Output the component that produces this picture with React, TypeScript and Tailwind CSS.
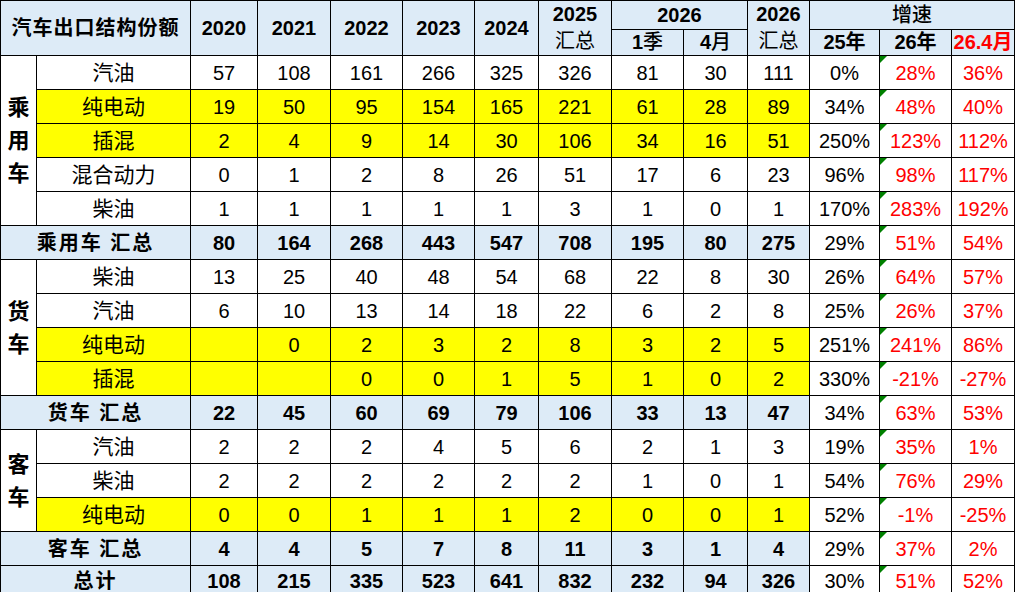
import React from 'react'

type Row = {
  label: string
  yellow?: boolean
  vals: (number | '')[]
  growth: string[]
}

type Group = {
  name: string
  summary: string
  rows: Row[]
  total: { vals: number[]; growth: string[] }
}

const groups: Group[] = [
  {
    name: '乘用车',
    summary: '乘用车 汇总',
    rows: [
      { label: '汽油', vals: [57, 108, 161, 266, 325, 326, 81, 30, 111], growth: ['0%', '28%', '36%'] },
      { label: '纯电动', yellow: true, vals: [19, 50, 95, 154, 165, 221, 61, 28, 89], growth: ['34%', '48%', '40%'] },
      { label: '插混', yellow: true, vals: [2, 4, 9, 14, 30, 106, 34, 16, 51], growth: ['250%', '123%', '112%'] },
      { label: '混合动力', vals: [0, 1, 2, 8, 26, 51, 17, 6, 23], growth: ['96%', '98%', '117%'] },
      { label: '柴油', vals: [1, 1, 1, 1, 1, 3, 1, 0, 1], growth: ['170%', '283%', '192%'] },
    ],
    total: { vals: [80, 164, 268, 443, 547, 708, 195, 80, 275], growth: ['29%', '51%', '54%'] },
  },
  {
    name: '货车',
    summary: '货车 汇总',
    rows: [
      { label: '柴油', vals: [13, 25, 40, 48, 54, 68, 22, 8, 30], growth: ['26%', '64%', '57%'] },
      { label: '汽油', vals: [6, 10, 13, 14, 18, 22, 6, 2, 8], growth: ['25%', '26%', '37%'] },
      { label: '纯电动', yellow: true, vals: ['', 0, 2, 3, 2, 8, 3, 2, 5], growth: ['251%', '241%', '86%'] },
      { label: '插混', yellow: true, vals: ['', '', 0, 0, 1, 5, 1, 0, 2], growth: ['330%', '-21%', '-27%'] },
    ],
    total: { vals: [22, 45, 60, 69, 79, 106, 33, 13, 47], growth: ['34%', '63%', '53%'] },
  },
  {
    name: '客车',
    summary: '客车 汇总',
    rows: [
      { label: '汽油', vals: [2, 2, 2, 4, 5, 6, 2, 1, 3], growth: ['19%', '35%', '1%'] },
      { label: '柴油', vals: [2, 2, 2, 2, 2, 2, 1, 0, 1], growth: ['54%', '76%', '29%'] },
      { label: '纯电动', yellow: true, vals: [0, 0, 1, 1, 1, 2, 0, 0, 1], growth: ['52%', '-1%', '-25%'] },
    ],
    total: { vals: [4, 4, 5, 7, 8, 11, 3, 1, 4], growth: ['29%', '37%', '2%'] },
  },
]

const grandTotal = { vals: [108, 215, 335, 523, 641, 832, 232, 94, 326], growth: ['30%', '51%', '52%'] }

// column widths measured off the sheet
const widths = [36, 154, 67, 73, 72, 72, 64, 73, 72, 64, 62, 70, 72, 63]

const td = 'border border-black text-center p-0 align-middle'

function Flag() {
  return (
    <span className="absolute top-0 left-0 w-0 h-0 border-t-[7px] border-t-[#008000] border-r-[7px] border-r-transparent" />
  )
}

function GrowthCells({ growth }: { growth: string[] }) {
  return (
    <>
      <td className={`${td} bg-white`}>{growth[0]}</td>
      <td className={`${td} bg-white text-[#ff0000] relative`}>
        <Flag />
        {growth[1]}
      </td>
      <td className={`${td} bg-white text-[#ff0000]`}>{growth[2]}</td>
    </>
  )
}

function TotalRow({ label, vals, growth, h = 'h-[34px]' }: { label: string; vals: number[]; growth: string[]; h?: string }) {
  return (
    <tr className={h}>
      <td colSpan={2} className={`${td} bg-[#ddebf7] font-bold tracking-[2px]`}>
        {label}
      </td>
      {vals.map((v, i) => (
        <td key={i} className={`${td} bg-[#ddebf7] font-bold`}>
          {v}
        </td>
      ))}
      <GrowthCells growth={growth} />
    </tr>
  )
}

export default function App() {
  return (
    <div className="w-[1017px] h-[592px] bg-white overflow-hidden font-['Liberation_Sans','Noto_Sans_CJK_SC',sans-serif] text-[20px] text-black">
      <table className="border-collapse table-fixed w-[1015px]">
        <colgroup>
          {widths.map((w, i) => (
            <col key={i} style={{ width: w }} />
          ))}
        </colgroup>
        <thead>
          <tr className="h-[28px]">
            <th colSpan={2} rowSpan={2} className={`${td} bg-[#ddebf7] font-bold tracking-[1px]`}>
              汽车出口结构份额
            </th>
            {[2020, 2021, 2022, 2023, 2024].map((y) => (
              <th key={y} rowSpan={2} className={`${td} bg-[#ddebf7] font-bold`}>
                {y}
              </th>
            ))}
            <th rowSpan={2} className={`${td} bg-[#ddebf7] leading-[27px]`}>
              <div className="font-bold">2025</div>
              <div className="font-normal">汇总</div>
            </th>
            <th colSpan={2} className={`${td} bg-[#ddebf7] font-bold leading-[26px]`}>
              2026
            </th>
            <th rowSpan={2} className={`${td} bg-[#ddebf7] leading-[27px]`}>
              <div className="font-bold">2026</div>
              <div className="font-normal">汇总</div>
            </th>
            <th colSpan={3} className={`${td} bg-[#ddebf7] font-medium leading-[26px]`}>
              增速
            </th>
          </tr>
          <tr className="h-[26px]">
            <th className={`${td} bg-[#ddebf7] font-medium leading-[24px]`}>
              <span className="font-bold">1</span>季
            </th>
            <th className={`${td} bg-[#ddebf7] font-medium leading-[24px]`}>
              <span className="font-bold">4</span>月
            </th>
            <th className={`${td} bg-[#ddebf7] font-bold leading-[24px]`}>25年</th>
            <th className={`${td} bg-[#ddebf7] font-bold leading-[24px]`}>26年</th>
            <th className={`${td} bg-[#ddebf7] font-bold leading-[24px] text-[#ff0000]`}>26.4月</th>
          </tr>
        </thead>
        <tbody>
          {groups.map((g) => (
            <React.Fragment key={g.name}>
              {g.rows.map((r, ri) => {
                const bg = r.yellow ? 'bg-[#ffff00]' : 'bg-white'
                return (
                  <tr key={ri} className="h-[34px]">
                    {ri === 0 && (
                      <td rowSpan={g.rows.length} className={`${td} bg-white font-bold text-[22px] leading-[33px]`}>
                        {g.name.split('').map((c, i) => (
                          <div key={i}>{c}</div>
                        ))}
                      </td>
                    )}
                    <td className={`${td} ${bg} text-[21px]`}>{r.label}</td>
                    {r.vals.map((v, i) => (
                      <td key={i} className={`${td} ${bg}`}>
                        {v}
                      </td>
                    ))}
                    <GrowthCells growth={r.growth} />
                  </tr>
                )
              })}
              <TotalRow label={g.summary} vals={g.total.vals} growth={g.total.growth} />
            </React.Fragment>
          ))}
          <TotalRow label="总计" vals={grandTotal.vals} growth={grandTotal.growth} h="h-[27px]" />
        </tbody>
      </table>
    </div>
  )
}
